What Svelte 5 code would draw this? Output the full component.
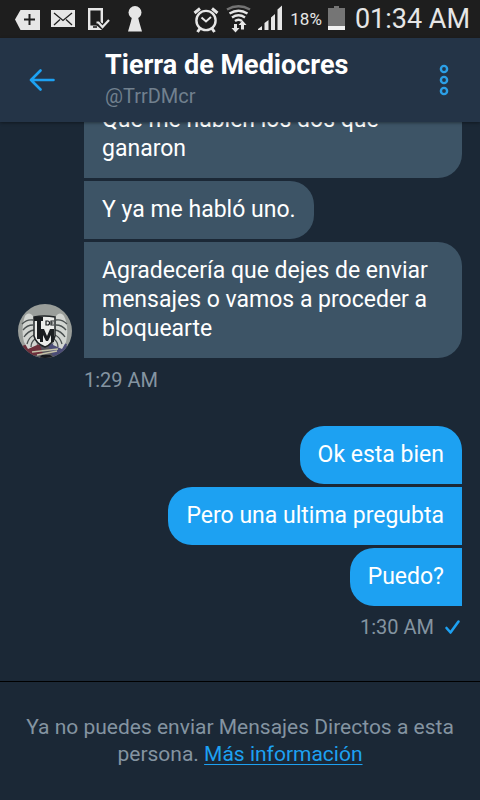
<script>
  const received = [
    'Que me hablen los dos que ganaron',
    'Y ya me habló uno.',
    'Agradecería que dejes de enviar mensajes o vamos a proceder a bloquearte'
  ];
  const sent = ['Ok esta bien', 'Pero una ultima pregubta', 'Puedo?'];
</script>

<div class="screen">
  <div class="status">
    <div class="notices">
      <svg width="26" height="38" viewBox="14 0 26 38" aria-hidden="true">
        <path d="M15 19.5 20.5 10H40V30H20.5Z" fill="#e6e6e6" />
        <path d="M24 19.5h11M29.5 14v11" stroke="#1e1e1e" stroke-width="2" />
      </svg>
      <svg width="24" height="38" viewBox="51 0 24 38" aria-hidden="true">
        <path d="M51 10h24v17H51z" fill="#e6e6e6" />
        <path d="M54 13l9 7.500 9-7.500M54 25l6-5.500M72 25l-6-5.500" fill="none" stroke="#1e1e1e" stroke-width="1.300" />
      </svg>
      <svg width="26" height="38" viewBox="86 0 26 38" aria-hidden="true">
        <path d="M89.200 9.200h12.600v19.600H89.200z" fill="none" stroke="#e6e6e6" stroke-width="2.400" />
        <path d="M88 25.500h15V30H88z" fill="#e6e6e6" />
        <path d="M96 21.500l6.500 5.500 7.500-8" fill="none" stroke="#1e1e1e" stroke-width="5" />
        <path d="M96.500 22.500l2 0 4 4.500 6.500-7" fill="none" stroke="#e6e6e6" stroke-width="2.200" />
        <path d="M93 27h4" stroke="#1e1e1e" stroke-width="1.600" />
      </svg>
      <svg width="24" height="38" viewBox="123 0 24 38" aria-hidden="true">
        <circle cx="135" cy="12.500" r="6.500" fill="#e6e6e6" />
        <path d="M132 17h6l1.500 6 2.500 8.500h-14l2.500-8.500z" fill="#e6e6e6" />
      </svg>
    </div>
    <div class="system">
      <svg width="26" height="38" viewBox="193 0 26 38" aria-hidden="true">
        <g fill="none" stroke="#e6e6e6" stroke-width="2.400">
          <circle cx="206" cy="20.500" r="9.600" />
          <path d="M201.500 17.500l4.500 4 5-4.500" stroke-width="2" />
          <path d="M194.500 13l5.500-4.500M217.500 13l-5.500-4.500M200 28.500l-2.500 3.500M212 28.500l2.500 3.500" stroke-width="3" />
        </g>
      </svg>
      <svg width="26" height="38" viewBox="226 0 26 38" aria-hidden="true">
        <g fill="none" stroke-width="2.400">
          <path d="M228 9.500q11.500-6.500 23 0" stroke="#737373" />
          <path d="M230.500 13.500q9-5.500 18 0M233 17.500q6.500-4.500 13 0M236 21q3.500-2.500 7 0" stroke="#e6e6e6" />
        </g>
        <path d="M235 24h3v4h2.500l-4 4.500-4-4.500h2.500zM242 29.500h3v-4.500h2.500l-4-4.500-4 4.500h2.500z" fill="#e6e6e6" />
      </svg>
      <svg width="27" height="38" viewBox="257 0 27 38" aria-hidden="true">
        <path d="M258 30v-1l4-3v4zM264.500 30v-7l4-3v10zM271 30V17.500l4-3.500v16zM277.500 30V9.500l4.500-4V30z" fill="#e6e6e6" />
      </svg>
      <span class="charge">18%</span>
      <svg width="21" height="38" viewBox="329 0 21 38" aria-hidden="true">
        <path d="M329 8h6V6h5v2h6v18h-17z" fill="#757575" />
        <path d="M329 26h17v4h-17z" fill="#f2f2f2" />
      </svg>
      <span class="clock">01:34 AM</span>
    </div>
  </div>

  <header>
    <button class="back" aria-label="Atrás">
      <svg width="26" height="22" viewBox="0 0 26 22" aria-hidden="true">
        <path d="M24.500 11H2M11.500 1.500L2 11l9.500 9.500" fill="none" stroke="#1da1f2" stroke-width="2.600" stroke-linecap="round" stroke-linejoin="round" />
      </svg>
    </button>
    <div class="who">
      <h1>Tierra de Mediocres</h1>
      <p>@TrrDMcr</p>
    </div>
    <button class="more" aria-label="Más opciones">
      <svg width="10" height="32" viewBox="0 0 10 32" aria-hidden="true">
        <g fill="none" stroke="#2b9fe6" stroke-width="2.400">
          <circle cx="5" cy="5" r="3.100" /><circle cx="5" cy="16" r="3.100" /><circle cx="5" cy="27" r="3.100" />
        </g>
      </svg>
    </button>
  </header>

  <main>
    <section class="received">
      <div class="row">
        <svg class="avatar" width="54" height="54" viewBox="0 0 54 54" role="img" aria-label="Tierra de Mediocres">
          <defs><clipPath id="round"><circle cx="27" cy="27" r="27" /></clipPath></defs>
          <g clip-path="url(#round)">
            <path d="M0 0h54v54H0z" fill="#9a9e9a" />
            <path d="M0 42h54v12H0z" fill="#55555c" />
            <path d="M4 42l8-3 10 2 3 9-12 2z" fill="#6d303c" />
            <path d="M30 41l10-3 9 2-2 9-12 3z" fill="#4c4d77" />
            <path d="M16 14C13 8 9 9 7 12 4 20 4 30 6 38l4 7 9-4-2-9z" fill="#d2d5d1" />
            <path d="M37 14c3-6 7-5 9-2 4 8 4 18 2 26l-4 7-9-4 2-9z" fill="#d2d5d1" />
            <path d="M15 16Q9 15 4 20M15 21Q9 21 5 26M16 26Q10 27 6 33M16 31q-5 2-7 9M17 35q-4 3-4 8M38 16q6-1 11 4M38 21q6 0 10 5M37 26q6 1 10 7M37 31q5 2 7 9M36 35q4 3 4 8" fill="none" stroke="#4a5050" stroke-width="1.300" />
            <path d="M16 13q10-2 21 0v19q-2 8-10 11-9-3-11-11z" fill="#ecedea" stroke="#202426" stroke-width="1.500" />
            <path d="M16 13h9v4h-2v18h-4V17h-3z" fill="#1b1e20" />
            <path d="M28 17h1.500q2 0 2 2t-2 2H28zM36 17h-3v4h3M33 19h2.500" fill="none" stroke="#1b1e20" stroke-width="1.200" />
            <path d="M22 38V25h4l3 7 3-7h4v13h-3v-7l-3 6h-2l-3-6v7z" fill="#1b1e20" />
            <path d="M14 48l26-3M19 51l20-4" stroke="#c3c1a7" stroke-width="1.300" />
            <path d="M21 54l3-3h8l4 3z" fill="#15191e" />
          </g>
        </svg>
        <div class="stack">
          {#each received as text}
            <p class="bubble">{text}</p>
          {/each}
        </div>
      </div>
      <time>1:29 AM</time>
    </section>

    <section class="sent">
      <div class="stack">
        {#each sent as text}
          <p class="bubble">{text}</p>
        {/each}
      </div>
      <div class="delivered">
        <time>1:30 AM</time>
        <svg width="18" height="16" viewBox="0 0 18 16" role="img" aria-label="Enviado">
          <path d="M2.500 9l4 4.500L14.500 2.500" fill="none" stroke="#1da1f2" stroke-width="2.600" stroke-linecap="round" stroke-linejoin="round" />
        </svg>
      </div>
    </section>
  </main>

  <footer>
    <p>Ya no puedes enviar Mensajes Directos a esta persona. <a href="#info">Más información</a></p>
  </footer>
</div>

<style>
  :global(body) {
    margin: 0;
    background: #1b2836;
  }
  .screen {
    display: flex;
    flex-direction: column;
    height: 100vh;
    overflow: hidden;
    background: #1b2836;
    color: #fff;
    font-family: Roboto, 'Liberation Sans', sans-serif;
  }
  h1,
  p {
    margin: 0;
  }
  svg {
    display: block;
    flex: none;
  }
  .status {
    display: flex;
    flex: none;
    justify-content: space-between;
    height: 38px;
    padding: 0 10px 0 14px;
    background: #1e1e1e;
    color: #e6e6e6;
  }
  .notices,
  .system {
    display: flex;
    align-items: center;
    white-space: nowrap;
  }
  .notices {
    gap: 11px;
  }
  .system {
    gap: 6px;
  }
  .charge {
    font-size: 17px;
    line-height: 38px;
  }
  .clock {
    font-size: 27px;
    line-height: 38px;
  }
  header {
    position: relative;
    z-index: 1;
    display: flex;
    flex: none;
    align-items: center;
    height: 84px;
    background: #243447;
    box-shadow: 0 1px 3px rgba(0, 0, 0, 0.4);
  }
  button {
    display: flex;
    align-items: center;
    justify-content: center;
    height: 84px;
    padding: 0;
    border: 0;
    background: none;
    cursor: pointer;
  }
  .back {
    width: 84px;
  }
  .more {
    width: 72px;
  }
  .who {
    flex: 1;
    min-width: 0;
    padding-left: 21px;
  }
  h1 {
    font-size: 27px;
    font-weight: 700;
    line-height: 32px;
  }
  .who p {
    color: #71808e;
    font-size: 20px;
    line-height: 30px;
  }
  main {
    display: flex;
    flex: 1;
    flex-direction: column;
    justify-content: flex-end;
    gap: 34px;
    min-height: 0;
    padding: 0 18px 42px;
    overflow: hidden;
  }
  section {
    flex: none;
  }
  .row {
    display: flex;
    align-items: flex-end;
    gap: 12px;
  }
  .stack {
    display: flex;
    flex: 1;
    flex-direction: column;
    align-items: flex-start;
    gap: 3px;
  }
  .bubble {
    padding: 14px 18px 15px;
    border-radius: 0 24px 24px 0;
    background: #3d5466;
    font-size: 23px;
    line-height: 29px;
  }
  .sent .stack {
    align-items: flex-end;
  }
  .sent .bubble {
    border-radius: 24px 0 0 24px;
    background: #1da1f2;
  }
  .sent .bubble:first-child {
    border-top-right-radius: 24px;
  }
  time {
    display: block;
    color: #8494a1;
    font-size: 20px;
    line-height: 24px;
  }
  .received time {
    margin: 10px 0 0 66px;
  }
  .delivered {
    display: flex;
    align-items: center;
    justify-content: flex-end;
    gap: 10px;
    margin-top: 9px;
  }
  footer {
    flex: none;
    padding: 32px 18px;
    border-top: 1px solid #000;
    color: #8494a1;
    font-size: 21px;
    line-height: 27px;
    text-align: center;
  }
  a {
    color: #1da1f2;
    text-decoration: underline;
    text-decoration-thickness: 1px;
    text-underline-offset: 3px;
  }
</style>
